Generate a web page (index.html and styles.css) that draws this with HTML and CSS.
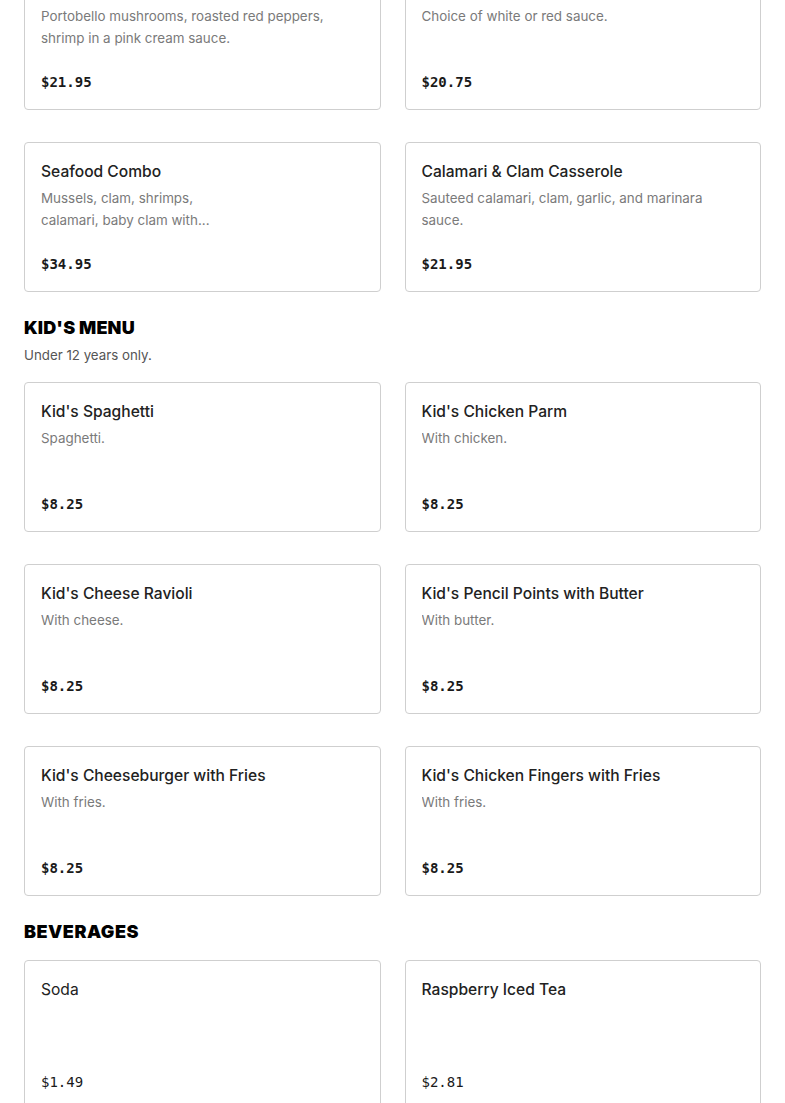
FILE: index.html
```html
<!DOCTYPE html>
<html lang="en">
<head>
<meta charset="utf-8">
<title>Menu</title>
<link rel="stylesheet" href="styles.css">
</head>
<body>
<main class="menu">
  <section class="section section--first">
    <div class="grid">
      <article class="card">
        <h3 class="card-title">Penne Portobello</h3>
        <p class="card-desc">Portobello mushrooms, roasted red peppers, shrimp in a pink cream sauce.</p>
        <p class="card-price">$21.95</p>
      </article>
      <article class="card">
        <h3 class="card-title">Linguine with Clams</h3>
        <p class="card-desc">Choice of white or red sauce.</p>
        <p class="card-price">$20.75</p>
      </article>
      <article class="card">
        <h3 class="card-title">Seafood Combo</h3>
        <p class="card-desc card-desc--narrow">Mussels, clam, shrimps, calamari, baby clam with...</p>
        <p class="card-price">$34.95</p>
      </article>
      <article class="card">
        <h3 class="card-title">Calamari &amp; Clam Casserole</h3>
        <p class="card-desc">Sauteed calamari, clam, garlic, and marinara sauce.</p>
        <p class="card-price">$21.95</p>
      </article>
    </div>
  </section>

  <section class="section">
    <h2 class="section-title">KID'S MENU</h2>
    <p class="section-sub">Under 12 years only.</p>
    <div class="grid">
      <article class="card">
        <h3 class="card-title">Kid's Spaghetti</h3>
        <p class="card-desc">Spaghetti.</p>
        <p class="card-price">$8.25</p>
      </article>
      <article class="card">
        <h3 class="card-title">Kid's Chicken Parm</h3>
        <p class="card-desc">With chicken.</p>
        <p class="card-price">$8.25</p>
      </article>
      <article class="card">
        <h3 class="card-title">Kid's Cheese Ravioli</h3>
        <p class="card-desc">With cheese.</p>
        <p class="card-price">$8.25</p>
      </article>
      <article class="card">
        <h3 class="card-title">Kid's Pencil Points with Butter</h3>
        <p class="card-desc">With butter.</p>
        <p class="card-price">$8.25</p>
      </article>
      <article class="card">
        <h3 class="card-title">Kid's Cheeseburger with Fries</h3>
        <p class="card-desc">With fries.</p>
        <p class="card-price">$8.25</p>
      </article>
      <article class="card">
        <h3 class="card-title">Kid's Chicken Fingers with Fries</h3>
        <p class="card-desc">With fries.</p>
        <p class="card-price">$8.25</p>
      </article>
    </div>
  </section>

  <section class="section">
    <h2 class="section-title section-title--wide">BEVERAGES</h2>
    <div class="grid">
      <article class="card card--plain">
        <h3 class="card-title card-title--light">Soda</h3>
        <p class="card-desc"></p>
        <p class="card-price">$1.49</p>
      </article>
      <article class="card card--plain">
        <h3 class="card-title">Raspberry Iced Tea</h3>
        <p class="card-desc"></p>
        <p class="card-price">$2.81</p>
      </article>
      <article class="card card--plain">
        <h3 class="card-title">Coffee</h3>
        <p class="card-desc"></p>
        <p class="card-price">$1.99</p>
      </article>
      <article class="card card--plain">
        <h3 class="card-title">Hot Tea</h3>
        <p class="card-desc"></p>
        <p class="card-price">$1.99</p>
      </article>
    </div>
  </section>
</main>
</body>
</html>
```
FILE: styles.css
```css
* { box-sizing: border-box; }

html, body {
  margin: 0;
  padding: 0;
  background: #ffffff;
}

body {
  font-family: "Inter", "Liberation Sans", sans-serif;
  color: #222222;
  overflow: hidden;
}

.menu {
  padding: 0 24px;
  margin-top: -40px;
}

.section {
  padding-top: 24px;
}

.section--first {
  padding-top: 0;
}

.section-title {
  margin: 0;
  font-family: "Inter", "Liberation Sans", sans-serif;
  font-weight: 900;
  font-size: 18px;
  line-height: 24px;
  color: #000000;
  letter-spacing: 0.15px;
}

.section-title--wide {
  letter-spacing: 0.5px;
}

.section-sub {
  margin: 4px 0 0;
  font-size: 13.3px;
  line-height: 22px;
  color: #555555;
}

.grid {
  margin-top: 16px;
  display: grid;
  grid-template-columns: 1fr 1fr;
  column-gap: 24px;
  row-gap: 32px;
}

.section--first .grid {
  margin-top: 0;
}

.card {
  border: 1px solid #cfcfcf;
  border-radius: 4px;
  padding: 17px 16px 17px;
  height: 150px;
  display: flex;
  flex-direction: column;
}

.card-title {
  margin: 0;
  font-size: 15.6px;
  font-weight: 500;
  line-height: 24px;
  color: #222222;
}

.card-title--light {
  font-weight: 400;
}

.card-desc {
  margin: 3px 0 0;
  height: 44px;
  font-size: 13.4px;
  line-height: 22px;
  color: #7a7a7a;
  overflow: hidden;
}

.card-desc--narrow {
  max-width: 185px;
}

.card-price {
  margin: 23px 0 0;
  font-family: "DejaVu Sans Mono", "Liberation Mono", monospace;
  font-size: 14px;
  font-weight: 700;
  line-height: 20px;
  color: #1a1a1a;
}

.card--plain .card-price {
  font-weight: 400;
}
```
